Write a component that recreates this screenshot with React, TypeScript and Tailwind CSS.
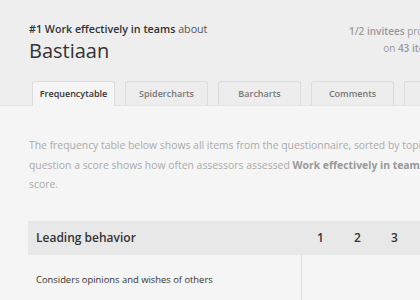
import React from "react";

const tabs = ["Frequencytable", "Spidercharts", "Barcharts", "Comments", "Topics"];

export default function App() {
  return (
    <div
      className="w-[420px] h-[300px] overflow-hidden bg-[#f5f5f5]"
      style={{ fontFamily: '"Open Sans", sans-serif' }}
    >
      <div className="w-[520px]">
        <div className="bg-[#eeeeee] pt-[20px]">
          <div className="flex pl-[29px] pr-[31px]">
            <div className="flex-1">
              <div className="text-[10.7px] leading-[18px] text-[#333]">
                <span className="font-semibold">#1 Work effectively in teams</span>{" "}
                <span className="text-[#555]">about</span>
              </div>
              <div className="text-[20px] leading-[28px] text-[#333] mt-[-1px]">Bastiaan</div>
            </div>
            <div className="w-[140px] shrink-0 whitespace-nowrap text-center text-[10px] leading-[17px] text-[#999] pt-[3px]">
              <div>
                <span className="font-semibold">1/2 invitees</span> provided feedback
              </div>
              <div className="pr-[16px]">
                on <span className="font-semibold">43 items</span>
              </div>
            </div>
          </div>
          <div className="flex gap-[10px] pl-[32px] mt-[16px] border-b border-[#e2e2e2]">
            {tabs.map((t, i) => (
              <div
                key={t}
                className={
                  i === 0
                    ? "w-[83px] shrink-0 h-[25px] mb-[-1px] flex items-center justify-center rounded-t-[3px] border border-b-0 border-[#dcdcdc] bg-[#f5f5f5] text-[9px] font-semibold text-[#333]"
                    : "w-[83px] shrink-0 h-[24px] flex items-center justify-center rounded-t-[3px] border border-b-0 border-[#dcdcdc] bg-[#ededed] text-[9px] font-semibold text-[#777]"
                }
              >
                {t}
              </div>
            ))}
          </div>
        </div>
        <div className="px-[29px] pt-[30px]">
          <p className="text-[10.4px] leading-[19.5px] text-[#aaa] whitespace-nowrap">
            The frequency table below shows all items from the questionnaire, sorted by topic. For each
            <br />
            question a score shows how often assessors assessed{" "}
            <span className="font-bold text-[#999]"> Work effectively in teams</span> with that
            <br />
            score.
          </p>
          <div className="mt-[26px] ml-[-1px]">
            <div className="flex h-[34px] bg-[#e8e8e8] items-center text-[#333]">
              <div className="w-[274px] shrink-0 pl-[8px] text-[12px] font-semibold">Leading behavior</div>
              <div className="w-[37px] shrink-0 text-center text-[12px] font-semibold">1</div>
              <div className="w-[37px] shrink-0 text-center text-[12px] font-semibold">2</div>
              <div className="w-[37px] shrink-0 text-center text-[12px] font-semibold">3</div>
              <div className="w-[37px] shrink-0 text-center text-[12px] font-semibold">4</div>
            </div>
            <div className="flex h-[50px]">
              <div className="w-[274px] shrink-0 pl-[8px] pt-[18px] text-[9.4px] text-[#333] border-r border-[#dddddd]">
                Considers opinions and wishes of others
              </div>
            </div>
          </div>
        </div>
      </div>
    </div>
  );
}
